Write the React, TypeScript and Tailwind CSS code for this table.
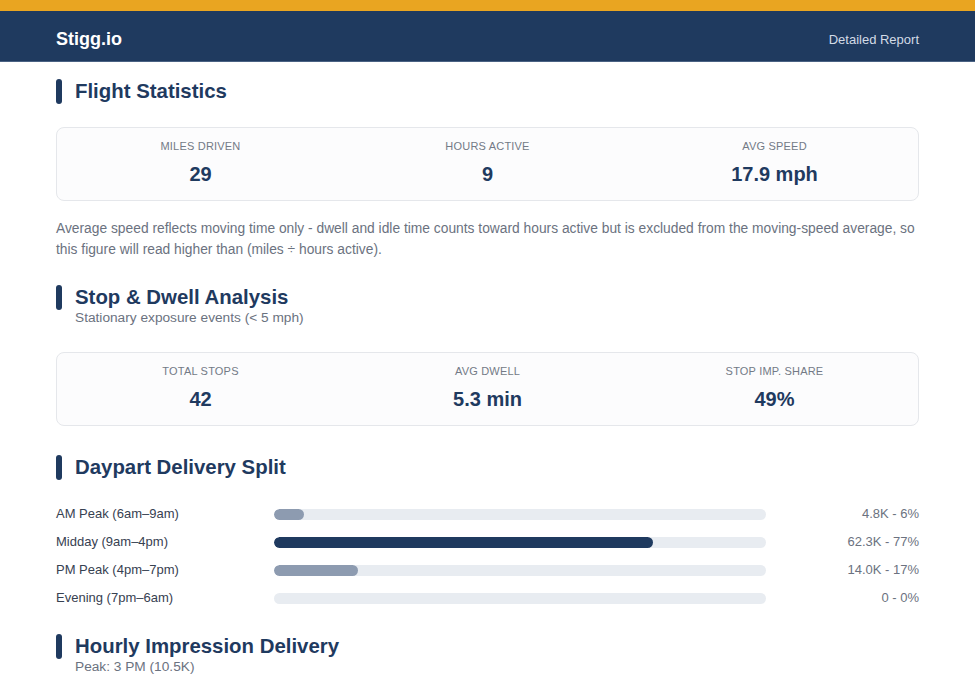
import React from "react";

const NAVY = "bg-[#1f3a5f]";

function SectionTitle({ title, subtitle }: { title: string; subtitle?: string }) {
  return (
    <div>
      <div className="flex items-center gap-[13px] h-[25px]">
        <div className={`w-[6px] h-[25px] rounded-full ${NAVY}`} />
        <h2 className="text-[20.4px] leading-[25px] font-bold text-[#1f3a5f]">{title}</h2>
      </div>
      {subtitle && (
        <div className="pl-[19px] text-[13.7px] leading-[16px] text-[#6b7280]">{subtitle}</div>
      )}
    </div>
  );
}

function StatCard({ items }: { items: { label: string; value: string }[] }) {
  return (
    <div className="grid grid-cols-3 border border-[#e5e7eb] rounded-[8px] bg-[#fcfcfd] pt-[11px] pb-[14px]">
      {items.map((it) => (
        <div key={it.label} className="flex flex-col items-center gap-[9px]">
          <div className="text-[11px] leading-[14px] tracking-[0.2px] text-[#737a86] uppercase">{it.label}</div>
          <div className="text-[20px] leading-[24px] font-bold text-[#1f3a5f]">{it.value}</div>
        </div>
      ))}
    </div>
  );
}

const rows = [
  { label: "AM Peak (6am–9am)", pct: 6, value: "4.8K - 6%", color: "bg-[#8d9bb0]" },
  { label: "Midday (9am–4pm)", pct: 77, value: "62.3K - 77%", color: "bg-[#1f3a5f]" },
  { label: "PM Peak (4pm–7pm)", pct: 17, value: "14.0K - 17%", color: "bg-[#8d9bb0]" },
  { label: "Evening (7pm–6am)", pct: 0, value: "0 - 0%", color: "bg-[#8d9bb0]" },
];

export default function App() {
  return (
    <div
      className="w-[975px] bg-white min-h-[675px]"
      style={{ fontFamily: '"Liberation Sans", Arial, sans-serif' }}
    >
      <div className="h-[11px] bg-[#e9a521]" />
      <header className={`h-[51px] ${NAVY} border-b border-[#4a6283] flex items-center justify-between px-[56px] pt-[7px]`}>
        <div className="text-[18px] font-bold text-white">Stigg.io</div>
        <div className="text-[13px] text-[#d3dbe6]">Detailed Report</div>
      </header>

      <main className="px-[56px]">
        <div className="pt-[17px]">
          <SectionTitle title="Flight Statistics" />
        </div>
        <div className="mt-[23px]">
          <StatCard
            items={[
              { label: "Miles Driven", value: "29" },
              { label: "Hours Active", value: "9" },
              { label: "Avg Speed", value: "17.9 mph" },
            ]}
          />
        </div>
        <p className="mt-[17px] text-[13.8px] leading-[21px] text-[#6b7280]">
          Average speed reflects moving time only - dwell and idle time counts toward hours active but is excluded from the moving-speed average, so this figure will read higher than (miles ÷ hours active).
        </p>

        <div className="mt-[25px]">
          <SectionTitle title="Stop & Dwell Analysis" subtitle="Stationary exposure events (< 5 mph)" />
        </div>
        <div className="mt-[26px]">
          <StatCard
            items={[
              { label: "Total Stops", value: "42" },
              { label: "Avg Dwell", value: "5.3 min" },
              { label: "Stop Imp. Share", value: "49%" },
            ]}
          />
        </div>

        <div className="mt-[29px]">
          <SectionTitle title="Daypart Delivery Split" />
        </div>
        <div className="mt-[20px] flex flex-col">
          {rows.map((r) => (
            <div key={r.label} className="flex items-center h-[28px]">
              <div className="w-[218px] text-[13px] text-[#374151]">{r.label}</div>
              <div className="flex-1 h-[11px] rounded-full bg-[#e8ecf1] overflow-hidden">
                <div className={`h-full rounded-full ${r.color}`} style={{ width: `${r.pct}%` }} />
              </div>
              <div className="w-[153px] text-right text-[13px] text-[#6b7280]">{r.value}</div>
            </div>
          ))}
        </div>

        <div className="mt-[22px]">
          <SectionTitle title="Hourly Impression Delivery" subtitle="Peak: 3 PM (10.5K)" />
        </div>
      </main>
    </div>
  );
}
